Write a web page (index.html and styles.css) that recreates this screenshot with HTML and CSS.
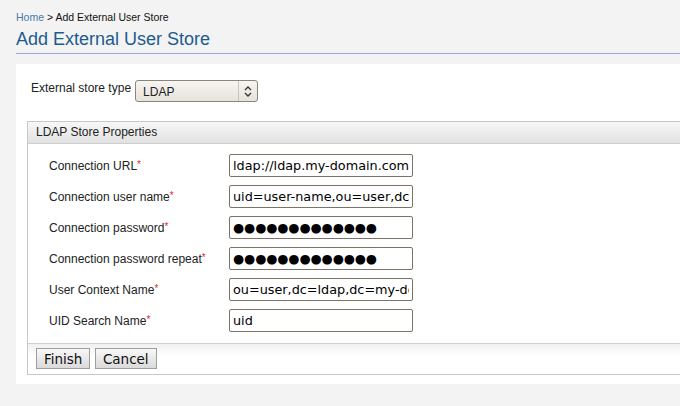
FILE: index.html
```html
<!DOCTYPE html>
<html lang="en">

<head>
  <meta charset="UTF-8">
  <title>Add External User Store</title>
  <link rel="stylesheet" href="styles.css">
</head>

<body>
  <div class="breadcrumb"><a href="#">Home</a> &gt; Add External User Store</div>
  <h2 class="page-title">Add External User Store</h2>

  <div class="content">
    <div class="type-row">
      <label class="type-label">External store type</label>
      <div class="select">
        <span class="select-value">LDAP</span>
        <span class="select-arrow">
          <svg width="8" height="11" viewBox="0 0 8 11">
            <path d="M1 4 L4 1 L7 4 M1 7 L4 10 L7 7" fill="none" stroke="#333" stroke-width="1.3" />
          </svg>
        </span>
      </div>
    </div>

    <div class="props">
      <div class="props-head">LDAP Store Properties</div>
      <table class="props-table">
        <tr>
          <td class="lbl">Connection URL<span class="req">*</span></td>
          <td><input class="field" type="text" value="ldap://ldap.my-domain.com:389"></td>
        </tr>
        <tr>
          <td class="lbl">Connection user name<span class="req">*</span></td>
          <td><input class="field" type="text" value="uid=user-name,ou=user,dc=ldap"></td>
        </tr>
        <tr>
          <td class="lbl">Connection password<span class="req">*</span></td>
          <td><input class="field pw" type="text" value="●●●●●●●●●●●●●"></td>
        </tr>
        <tr>
          <td class="lbl">Connection password repeat<span class="req">*</span></td>
          <td><input class="field pw" type="text" value="●●●●●●●●●●●●●"></td>
        </tr>
        <tr>
          <td class="lbl">User Context Name<span class="req">*</span></td>
          <td><input class="field" type="text" value="ou=user,dc=ldap,dc=my-domain"></td>
        </tr>
        <tr>
          <td class="lbl">UID Search Name<span class="req">*</span></td>
          <td><input class="field" type="text" value="uid"></td>
        </tr>
      </table>
      <div class="buttons">
        <input type="button" class="btn" value="Finish">
        <input type="button" class="btn" value="Cancel">
      </div>
    </div>
  </div>
</body>

</html>
```

FILE: styles.css
```css
body {
  margin: 0;
  background: #f3f3f3;
  font-family: "Liberation Sans", Arial, sans-serif;
  color: #222;
  overflow: hidden;
}

.breadcrumb {
  padding: 11px 0 0 16px;
  font-size: 10.5px;
  line-height: 13px;
  color: #111;
}

.breadcrumb a {
  color: #4a78aa;
  text-decoration: none;
}

.page-title {
  margin: 4px 0 0 16px;
  padding: 0 0 3px;
  font-size: 18px;
  font-weight: normal;
  line-height: 22px;
  color: #1d5b8f;
  border-bottom: 1px solid #97a9cd;
}

.content {
  margin: 10px 0 0 16px;
  padding: 16px 0 9px 11px;
  background: #fff;
}

.type-row {
  display: flex;
  align-items: flex-start;
  padding-left: 4px;
}

.type-label {
  font-size: 12px;
  line-height: 14px;
  padding-top: 1px;
  margin-right: 4px;
}

.select {
  display: flex;
  width: 121px;
  height: 20px;
  border: 1px solid #8c857b;
  border-radius: 3px;
  background: linear-gradient(#f7f5f2, #e6e2dc);
  font-size: 12px;
}

.select-value {
  flex: 1;
  padding: 4px 0 0 7px;
  border-right: 1px solid #c9c4bc;
}

.select-arrow {
  width: 18px;
  display: flex;
  align-items: center;
  justify-content: center;
}

.props {
  margin-top: 19px;
  border: 1px solid #c8c8c8;
  border-right: 0;
}

.props-head {
  height: 21px;
  padding-left: 8px;
  font-size: 12px;
  line-height: 21px;
  background: linear-gradient(#f7f7f7, #e1e1e1);
  border-bottom: 1px solid #cfcfcf;
}

.props-table {
  margin: 2px 0 3px 17px;
  border-spacing: 4px 8px;
}

.props-table td {
  padding: 0;
}

.lbl {
  width: 176px;
  font-size: 12px;
  vertical-align: middle;
}

.req {
  color: #e32a2a;
  font-size: 10px;
  vertical-align: top;
}

.field {
  box-sizing: border-box;
  width: 184px;
  height: 23px;
  margin: 0;
  padding: 0 3px;
  border: 1px solid #7b7366;
  border-radius: 2px;
  font-family: "DejaVu Sans", sans-serif;
  font-size: 12.8px;
  color: #000;
  background: #fff;
}

.pw {
  font-size: 12.7px;
}

.buttons {
  height: 31px;
  padding: 4px 0 0 8px;
  box-sizing: border-box;
  border-top: 1px solid #cfcfcf;
  background: linear-gradient(#f0f0f0, #fff 12px);
}

.btn {
  height: 21px;
  margin: 0;
  padding: 0 7px;
  border: 1px solid #9e9e9e;
  border-radius: 0;
  background: linear-gradient(#f8f8f8, #dadada);
  font-family: "DejaVu Sans", sans-serif;
  font-size: 13.5px;
  color: #111;
}
```
